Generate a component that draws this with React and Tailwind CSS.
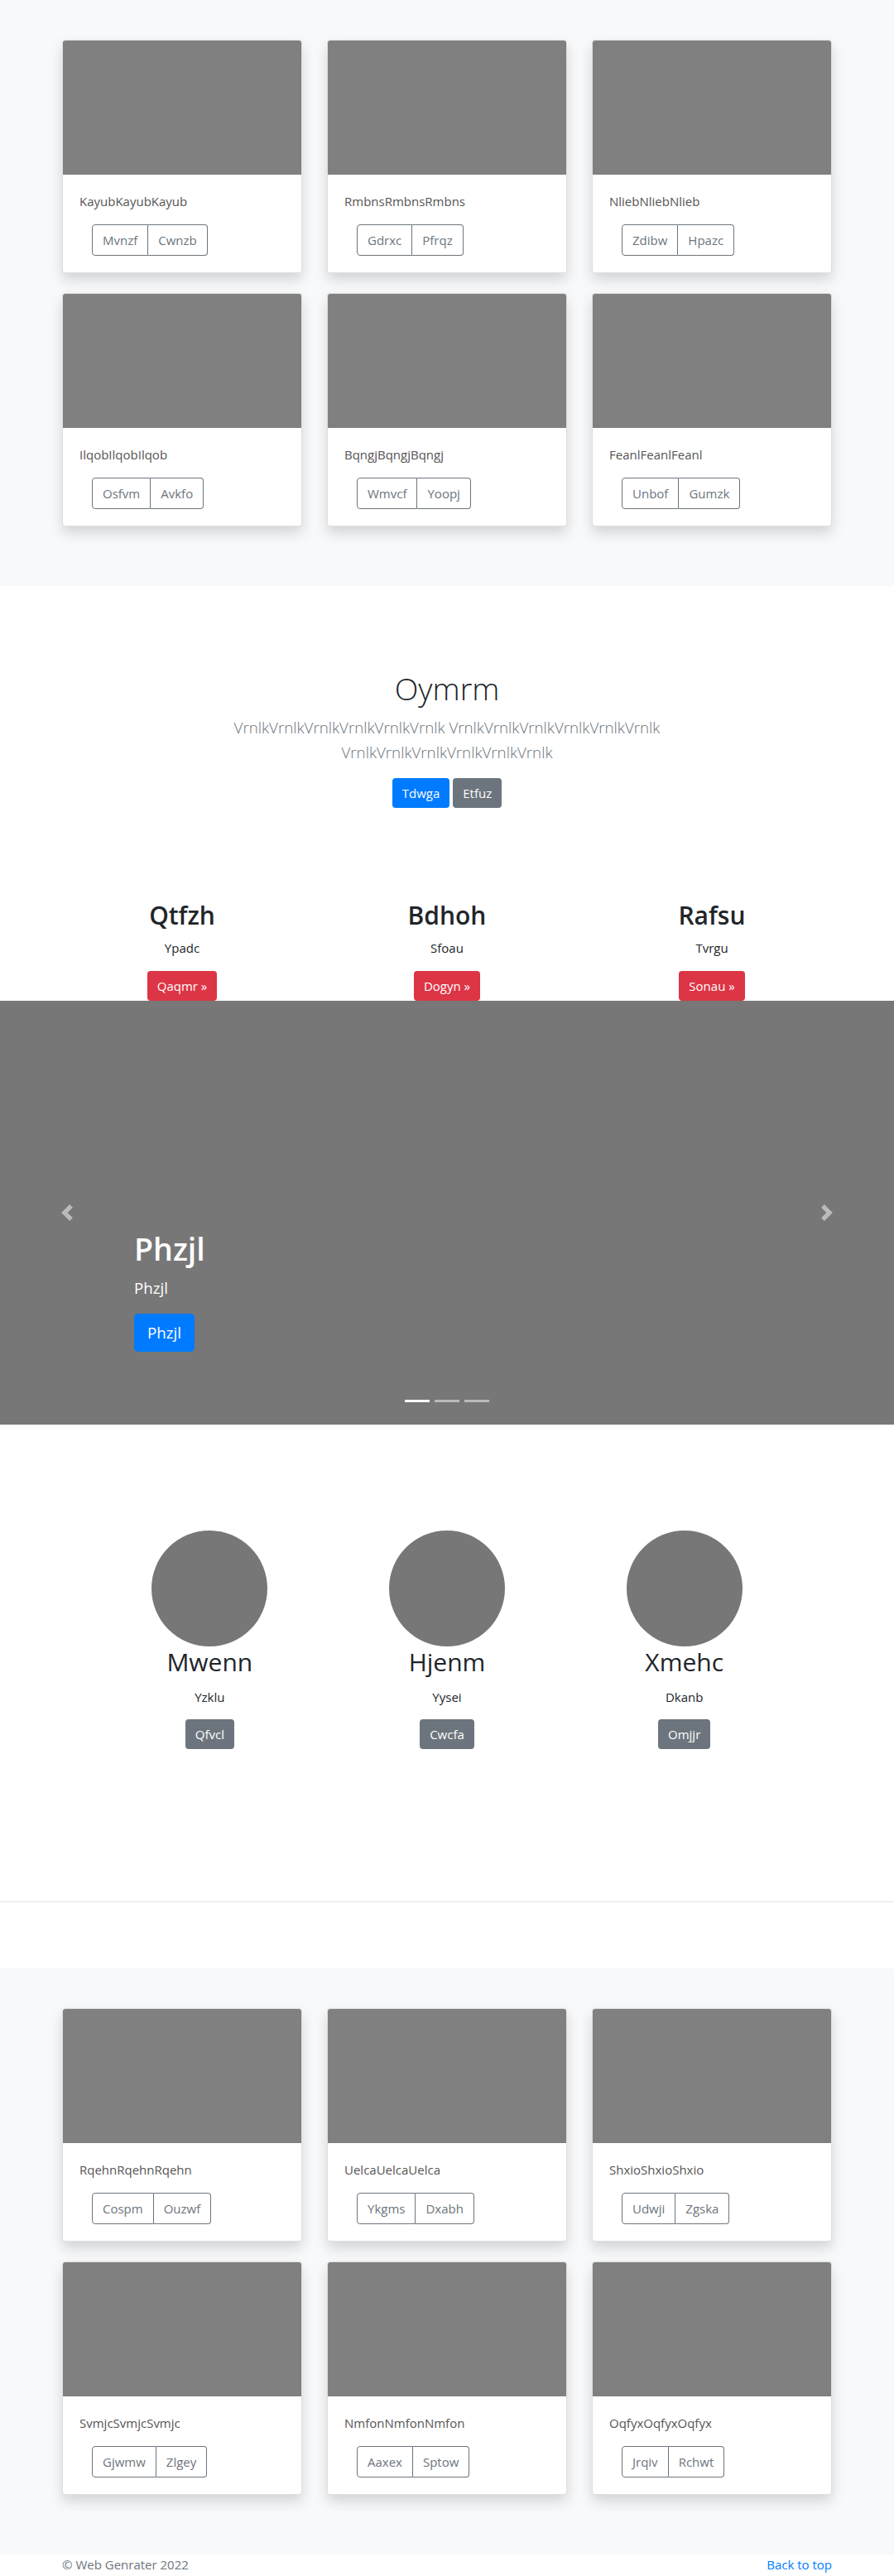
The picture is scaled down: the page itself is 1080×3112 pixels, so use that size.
import React from "react";

const cards1 = [
  ["KayubKayubKayub", "Mvnzf", "Cwnzb"],
  ["RmbnsRmbnsRmbns", "Gdrxc", "Pfrqz"],
  ["NliebNliebNlieb", "Zdibw", "Hpazc"],
  ["IlqobIlqobIlqob", "Osfvm", "Avkfo"],
  ["BqngjBqngjBqngj", "Wmvcf", "Yoopj"],
  ["FeanlFeanlFeanl", "Unbof", "Gumzk"],
];

const cards2 = [
  ["RqehnRqehnRqehn", "Cospm", "Ouzwf"],
  ["UelcaUelcaUelca", "Ykgms", "Dxabh"],
  ["ShxioShxioShxio", "Udwji", "Zgska"],
  ["SvmjcSvmjcSvmjc", "Gjwmw", "Zlgey"],
  ["NmfonNmfonNmfon", "Aaxex", "Sptow"],
  ["OqfyxOqfyxOqfyx", "Jrqiv", "Rchwt"],
];

function Card({ title, a, b }) {
  return (
    <div className="bg-white border border-black/[.125] rounded-[4px] shadow-[0_8px_16px_rgba(0,0,0,0.15)] overflow-hidden">
      <div className="h-[162px] bg-[#808080]" />
      <div className="p-5">
        <p className="text-[15px] leading-6 mb-4 text-[#555]">{title}</p>
        <div className="ml-[15px] inline-flex">
          <button className="px-3 py-[6px] text-[15px] leading-6 text-[#6c757d] border border-[#6c757d] rounded-l-[4px]">
            {a}
          </button>
          <button className="px-3 py-[6px] text-[15px] leading-6 text-[#6c757d] border border-[#6c757d] border-l-0 rounded-r-[4px]">
            {b}
          </button>
        </div>
      </div>
    </div>
  );
}

function Album({ cards }) {
  return (
    <section className="bg-[#f8f9fa] pt-12 pb-[72px]">
      <div className="w-[960px] mx-auto px-[15px]">
        <div className="grid grid-cols-3 gap-x-[30px] gap-y-6">
          {cards.map((c) => (
            <Card key={c[0]} title={c[0]} a={c[1]} b={c[2]} />
          ))}
        </div>
      </div>
    </section>
  );
}

function Chevron({ dir }) {
  return (
    <svg width="20" height="20" viewBox="0 0 8 8" fill="#fff">
      {dir === "left" ? (
        <path d="M5.25 0l-4 4 4 4 1.5-1.5L4.25 4l2.5-2.5L5.25 0z" />
      ) : (
        <path d="M2.75 0l-1.5 1.5L3.75 4l-2.5 2.5L2.75 8l4-4-4-4z" />
      )}
    </svg>
  );
}

export default function App() {
  const features = [
    ["Qtfzh", "Ypadc", "Qaqmr »"],
    ["Bdhoh", "Sfoau", "Dogyn »"],
    ["Rafsu", "Tvrgu", "Sonau »"],
  ];
  const people = [
    ["Mwenn", "Yzklu", "Qfvcl"],
    ["Hjenm", "Yysei", "Cwcfa"],
    ["Xmehc", "Dkanb", "Omjjr"],
  ];
  return (
    <div className="font-['Open_Sans','Noto_Sans',sans-serif] text-[#212529] bg-white">
      <Album cards={cards1} />

      {/* Jumbotron */}
      <section className="bg-white text-center pt-[100px] pb-[103px]">
        <h1 className="text-[37.5px] font-light leading-[48px] mb-2 text-[#212529]">Oymrm</h1>
        <p className="max-w-[640px] mx-auto text-[18.75px] font-light leading-[30px] text-[#6c757d] mb-4">
          VrnlkVrnlkVrnlkVrnlkVrnlkVrnlk VrnlkVrnlkVrnlkVrnlkVrnlkVrnlk VrnlkVrnlkVrnlkVrnlkVrnlkVrnlk
        </p>
        <div className="my-2 flex justify-center gap-1">
          <button className="px-3 py-[6px] text-[15px] leading-6 text-white bg-[#007bff] rounded-[4px]">Tdwga</button>
          <button className="px-3 py-[6px] text-[15px] leading-6 text-white bg-[#6c757d] rounded-[4px]">Etfuz</button>
        </div>
      </section>

      {/* Features */}
      <section className="w-[960px] mx-auto grid grid-cols-3">
        {features.map((f) => (
          <div key={f[0]} className="px-[15px] text-center">
            <h2 className="text-[30px] font-semibold leading-[38.4px] mb-2 text-[#212529]">{f[0]}</h2>
            <p className="text-[15px] leading-6 mb-4 text-[#212529]">{f[1]}</p>
            <button className="px-3 py-[6px] text-[15px] leading-6 text-white bg-[#dc3545] rounded-[4px] align-top">
              {f[2]}
            </button>
          </div>
        ))}
      </section>

      {/* Carousel */}
      <section className="relative h-[512px] bg-[#777]">
        <div className="absolute left-0 top-0 bottom-0 w-[15%] flex items-center justify-center opacity-50">
          <Chevron dir="left" />
        </div>
        <div className="absolute right-0 top-0 bottom-0 w-[15%] flex items-center justify-center opacity-50">
          <Chevron dir="right" />
        </div>
        <div className="absolute left-[162px] right-[162px] bottom-[88px] text-left text-white">
          <h1 className="text-[37.5px] font-semibold leading-[48px] mb-2">Phzjl</h1>
          <p className="text-[18.75px] leading-[30px] mb-4">Phzjl</p>
          <button className="px-4 py-2 text-[18.75px] leading-[30px] text-white bg-[#007bff] rounded-[4.8px]">Phzjl</button>
        </div>
        <div className="absolute left-0 right-0 bottom-[27px] flex justify-center gap-[6px]">
          <span className="w-[30px] h-[3px] bg-white" />
          <span className="w-[30px] h-[3px] bg-white/50" />
          <span className="w-[30px] h-[3px] bg-white/50" />
        </div>
      </section>

      {/* Marketing */}
      <section className="w-[860px] mx-auto grid grid-cols-3 pt-[128px]">
        {people.map((p) => (
          <div key={p[0]} className="text-center">
            <div className="w-[140px] h-[140px] rounded-full bg-[#777] mx-auto" />
            <h2 className="text-[30px] font-normal leading-[38.4px] mb-[10px] text-[#212529]">{p[0]}</h2>
            <p className="text-[15px] leading-6 mb-[15px] text-[#212529]">{p[1]}</p>
            <button className="px-3 py-[6px] text-[15px] leading-6 text-white bg-[#6c757d] rounded-[4px] align-top">
              {p[2]}
            </button>
          </div>
        ))}
      </section>

      <div className="h-[184px]" />
      <hr className="border-0 border-t border-black/10" />
      <div className="h-[80px]" />

      <Album cards={cards2} />

      <footer className="pb-12">
        <div className="w-[960px] mx-auto px-[15px] flex justify-between text-[15px] leading-6">
          <p className="text-[#6c757d]">© Web Genrater 2022</p>
          <a className="text-[#007bff]" href="#">Back to top</a>
        </div>
      </footer>
    </div>
  );
}
